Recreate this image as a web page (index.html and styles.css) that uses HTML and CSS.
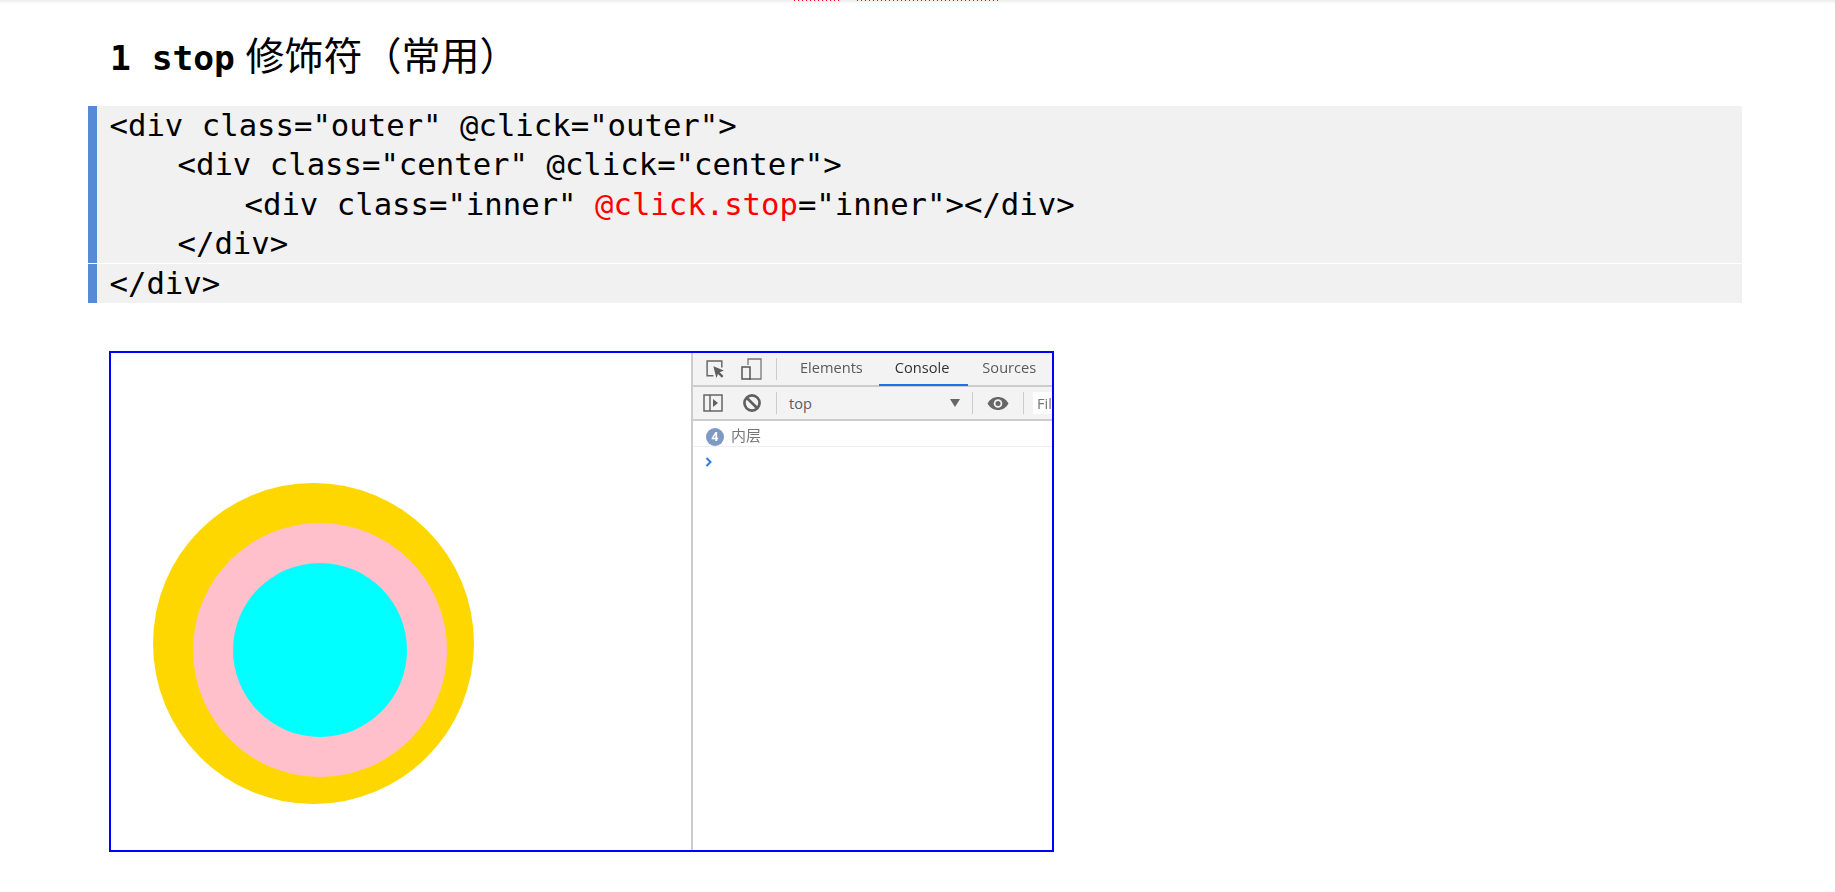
FILE: index.html
```html
<!DOCTYPE html>
<html lang="zh-CN">
<head>
<meta charset="utf-8">
<title>stop 修饰符</title>
<link rel="stylesheet" href="styles.css">
</head>
<body>
<div class="top-strip"><span class="squiggle squiggle-a"></span><span class="squiggle squiggle-b"></span></div>
<main class="page">
  <h1 class="title"><span class="title-code">1 stop</span> <span class="title-cjk">修饰符（常用）</span></h1>
  <div class="code-group">
    <pre class="code code-main"><code>&lt;div class="outer" @click="outer"&gt;
<span class="line-1">&lt;div class="center" @click="center"&gt;</span>
<span class="line-2">&lt;div class="inner" <span class="hl">@click.stop</span>="inner"&gt;&lt;/div&gt;</span>
<span class="line-1">&lt;/div&gt;</span></code></pre>
    <pre class="code"><code>&lt;/div&gt;</code></pre>
  </div>
  <section class="shot">
    <div class="stage">
      <div class="circle gold"><div class="circle pink"><div class="circle cyan"></div></div></div>
    </div>
    <div class="devtools">
      <div class="tabs">
        <svg class="ico ico-inspect" viewBox="0 0 20 20"><path d="M8 16H2V2h14v6" fill="none" stroke="#666" stroke-width="1.4"/><path d="M8 7l10 4-4 1.6 3.6 3.6-1.6 1.6-3.6-3.6L10.800 18z" fill="#5f5f5f"/></svg>
        <svg class="ico ico-device" viewBox="0 0 21 22"><path d="M7 7V1h13v20H8" fill="none" stroke="#777" stroke-width="1.3"/><rect x="1" y="9" width="8" height="12" fill="none" stroke="#555" stroke-width="1.5"/></svg>
        <span class="sep sep-tabs"></span>
        <span class="tab tab-elements">Elements</span>
        <span class="tab tab-console">Console</span>
        <span class="tab tab-sources">Sources</span>
      </div>
      <div class="toolbar">
        <svg class="ico ico-side" viewBox="0 0 20 18"><rect x="1" y="1" width="18" height="16" fill="none" stroke="#666" stroke-width="1.5"/><path d="M7 1v16" stroke="#666" stroke-width="1.5"/><path d="M10 5l5 4-5 4z" fill="#5f5f5f"/></svg>
        <svg class="ico ico-clear" viewBox="0 0 18 18"><circle cx="9" cy="9" r="6.800" fill="none" stroke="#5f5f5f" stroke-width="2.400"/><path d="M4 4l10 10" stroke="#5f5f5f" stroke-width="2.400"/></svg>
        <span class="sep sep-ctx"></span>
        <span class="ctx">top</span>
        <span class="caret"></span>
        <span class="sep sep-eye"></span>
        <svg class="ico ico-eye" viewBox="0 0 22 14"><path d="M0.500 7C3 2.500 7 0.500 11 0.500S19 2.500 21.500 7C19 11.500 15 13.500 11 13.500S3 11.500 0.500 7z" fill="#666"/><circle cx="11" cy="7" r="4.300" fill="#f3f3f3"/><circle cx="11" cy="7" r="2.500" fill="#666"/></svg>
        <span class="sep sep-filter"></span>
        <span class="filter">Fil</span>
      </div>
      <div class="message"><span class="badge">4</span><span class="msg-text">内层</span></div>
      <div class="prompt"><svg class="ico ico-prompt" viewBox="0 0 8 10"><path d="M1.500 1l4 4-4 4" fill="none" stroke="#2f7de1" stroke-width="2"/></svg></div>
    </div>
  </section>
</main>
</body>
</html>
```

FILE: styles.css
```css
* { box-sizing: border-box; }
html, body { margin: 0; padding: 0; background: #fff; }
body { height: 892px; overflow: hidden; color: #000; }

.top-strip {
  height: 4px;
  display: flex;
  gap: 18px;
  padding-left: 794px;
  background: linear-gradient(#ececec, #fff);
}
.squiggle {
  height: 1px;
  background: repeating-linear-gradient(90deg, #f00 0 1.500px, transparent 1.500px 4px);
}
.squiggle-a { width: 45px; }
.squiggle-b { width: 141px; }

.page { padding: 0 93px 0 88px; }

.title {
  margin: 0;
  height: 102px;
  padding: 25px 0 0 22px;
  font-size: 34px;
  line-height: 48px;
  font-weight: 400;
  white-space: pre;
}
.title-code {
  font-family: "DejaVu Sans Mono", monospace;
  font-weight: 700;
  font-size: 34.600px;
}
.title-cjk {
  margin-left: 2px;
  font-family: "Noto Sans CJK SC", sans-serif;
  font-size: 39px;
  font-weight: 400;
}

.code-group { display: flex; flex-direction: column; gap: 1px; }
.code {
  margin: 0;
  padding-left: 12.500px;
  border-left: 9px solid #558bd6;
  background: #f1f1f1;
  font-family: "DejaVu Sans Mono", monospace;
  font-size: 30.650px;
  line-height: 39.250px;
  height: 39px;
  white-space: pre;
  overflow: hidden;
}
.code code { font: inherit; }
.code-main { height: 157px; }
.line-1 { display: inline-block; padding-left: 68px; }
.line-2 { display: inline-block; padding-left: 135px; }
.hl { color: #f00; }

.shot {
  display: flex;
  width: 945px;
  height: 501px;
  margin: 48px 0 0 21px;
  border: 2px solid #00f;
}
.stage { width: 580px; padding: 130px 0 0 42px; }
.circle { border-radius: 50%; padding: 40px; }
.gold { width: 321px; height: 321px; background: #ffd700; }
.pink { width: 254px; height: 254px; background: #ffc0cb; }
.cyan { width: 174px; height: 174px; padding: 0; background: #0ff; }

.devtools {
  flex: 1;
  min-width: 0;
  overflow: hidden;
  border-left: 2px solid #ccc;
  font-family: "Open Sans", "Noto Sans CJK SC", sans-serif;
  filter: blur(0.35px);
}
.tabs, .toolbar {
  display: flex;
  align-items: center;
  background: #f3f3f3;
  border-bottom: 2px solid #ccc;
  white-space: nowrap;
}
.tabs { height: 34px; position: relative; }
.toolbar { height: 34px; }
.ico { display: block; flex: none; }
.ico-inspect { width: 21px; height: 21px; margin-left: 12px; }
.ico-device { width: 21px; height: 22px; margin-left: 15px; }
.sep { flex: none; width: 1px; height: 22px; background: #ccc; }
.sep-tabs { margin-left: 14px; }
.tab { font-size: 14.600px; color: #5a5a5a; margin-bottom: 4px; }
.tab-elements { margin-left: 23px; }
.tab-console { margin-left: 32px; color: #333; }
.tab-sources { margin-left: 33px; }
.tab-console::after {
  content: "";
  position: absolute;
  left: 186px;
  bottom: -1px;
  width: 89px;
  height: 2px;
  background: #1a73e8;
}
.ico-side { width: 20px; height: 18px; margin-left: 10px; }
.ico-clear { width: 20px; height: 20px; margin-left: 19px; }
.sep-ctx { margin-left: 14px; }
.ctx { margin-left: 12px; font-size: 14.600px; color: #5a5a5a; }
.caret {
  margin-left: 138px;
  width: 0;
  height: 0;
  border-left: 5px solid transparent;
  border-right: 5px solid transparent;
  border-top: 8px solid #666;
}
.sep-eye { margin-left: 12px; }
.ico-eye { width: 22px; height: 15px; margin-left: 14px; }
.sep-filter { margin-left: 14px; }
.filter {
  margin-left: 9px;
  padding-left: 4px;
  width: 40px;
  height: 22px;
  line-height: 22px;
  font-size: 14.600px;
  color: #777;
  background: #fff;
}
.message {
  display: flex;
  align-items: center;
  height: 26px;
  border-bottom: 1px solid #eee;
  padding: 6px 0 0 13px;
}
.badge {
  width: 18px;
  height: 18px;
  border-radius: 50%;
  background: #7f99c5;
  color: #fff;
  font-size: 12px;
  font-weight: 700;
  line-height: 18px;
  text-align: center;
}
.msg-text { margin: 0 0 4px 7px; font-size: 15px; line-height: 18px; color: #777; }
.prompt { padding: 10px 0 0 12px; }
.ico-prompt { width: 8px; height: 10px; }
```
